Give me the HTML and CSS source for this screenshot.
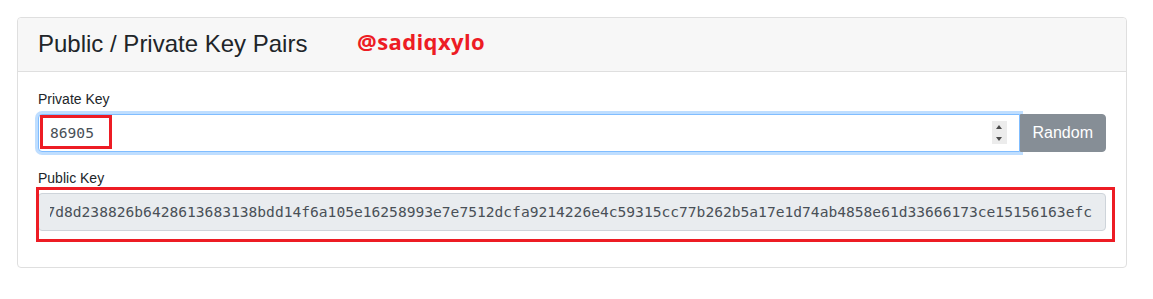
FILE: index.html
```html
<!DOCTYPE html>
<html>
<head>
    <title>Public / Private Key Pairs</title>
    <link rel="stylesheet" href="styles.css">
</head>
<body>
    <div class="page">
        <div class="card">
            <div class="card-header">
                <h4 class="card-title">Public / Private Key Pairs</h4>
            </div>
            <div class="card-body">
                <div class="form-group">
                    <label for="privateKey">Private Key</label>
                    <div class="input-group">
                        <div class="form-control number-field">
                            <input id="privateKey" class="bare-input" type="text" value="86905">
                            <span class="spinner"><span class="spin-up"></span><span class="spin-down"></span></span>
                        </div>
                        <button type="button" class="btn-random">Random</button>
                    </div>
                </div>
                <div class="form-group">
                    <label>Public Key</label>
                    <div class="form-control readonly-field">
                        <div class="key-scroll">
                            <span class="key-text">04a91bce30f2e5b8c41d7d8d238826b6428613683138bdd14f6a105e16258993e7e7512dcfa9214226e4c59315cc77b262b5a17e1d74ab4858e61d33666173ce15156163efc</span>
                        </div>
                    </div>
                </div>
            </div>
        </div>

        <!-- annotations drawn on top of the screenshot -->
        <span class="handle">@sadiqxylo</span>
        <span class="mark mark-private"></span>
        <span class="mark mark-public"></span>
    </div>
</body>
</html>
```

FILE: styles.css
```css
body {
    margin: 0;
    background: #fff;
    font-family: "Liberation Sans", Arial, sans-serif;
    color: #212529;
}
.page {
    position: relative;
    padding: 17px 0 0 17px;
}
.card {
    width: 1110px;
    box-sizing: border-box;
    border: 1px solid #dfdfdf;
    border-radius: 4px;
    background: #fff;
}
.card-header {
    background: #f7f7f7;
    border-bottom: 1px solid #dfdfdf;
    padding: 12px 20px;
    border-radius: 4px 4px 0 0;
}
.card-title {
    margin: 0;
    font-size: 24px;
    font-weight: 400;
    line-height: 28.8px;
}
.card-body {
    padding: 17px 20px 20px;
}
.form-group {
    margin-bottom: 16px;
}
.form-group label {
    display: block;
    font-size: 14px;
    line-height: 21px;
    margin-bottom: 4px;
}
.input-group {
    display: flex;
}
.form-control {
    height: 38px;
    box-sizing: border-box;
    border: 1px solid #ced4da;
    border-radius: 4px;
    display: flex;
    align-items: center;
    font-family: "DejaVu Sans Mono", monospace;
    font-size: 14.6px;
    color: #495057;
}
.number-field {
    flex: 1;
    border-color: #80bdff;
    border-radius: 4px 0 0 4px;
    box-shadow: 0 0 0 3px rgba(0, 123, 255, 0.25);
    padding: 0 12px 0 11px;
    background: #fff;
}
.bare-input {
    flex: 1;
    min-width: 0;
    border: 0;
    padding: 0;
    outline: none;
    background: transparent;
    font: inherit;
    color: inherit;
}
.spinner {
    width: 15px;
    height: 23px;
    background: #ececec;
    display: flex;
    flex-direction: column;
    align-items: center;
    justify-content: space-around;
}
.spin-up {
    border-left: 3.5px solid transparent;
    border-right: 3.5px solid transparent;
    border-bottom: 4px solid #4a4a4a;
}
.spin-down {
    border-left: 3.5px solid transparent;
    border-right: 3.5px solid transparent;
    border-top: 4px solid #4a4a4a;
}
.btn-random {
    z-index: 2;
    height: 38px;
    padding: 0 12px;
    border: 1px solid #868e96;
    border-radius: 0 4px 4px 0;
    background: #868e96;
    color: #fff;
    font-family: "Liberation Sans", Arial, sans-serif;
    font-size: 16px;
    cursor: pointer;
}
.readonly-field {
    background: #e9ecef;
    padding: 0 13px 0 11px;
}
.key-scroll {
    flex: 1;
    min-width: 0;
    overflow: hidden;
    white-space: nowrap;
    display: flex;
    justify-content: flex-end;
}
.key-text {
    flex-shrink: 0;
}
.handle {
    position: absolute;
    left: 357px;
    top: 30px;
    font-family: "Open Sans", sans-serif;
    font-weight: 700;
    font-size: 22px;
    line-height: 22px;
    color: #ed1c24;
    letter-spacing: 0.4px;
}
.mark {
    position: absolute;
    border: 3px solid #ed1c24;
    box-sizing: border-box;
}
.mark-private {
    left: 40px;
    top: 115px;
    width: 72px;
    height: 34px;
}
.mark-public {
    left: 36px;
    top: 187px;
    width: 1079px;
    height: 55px;
}
```
